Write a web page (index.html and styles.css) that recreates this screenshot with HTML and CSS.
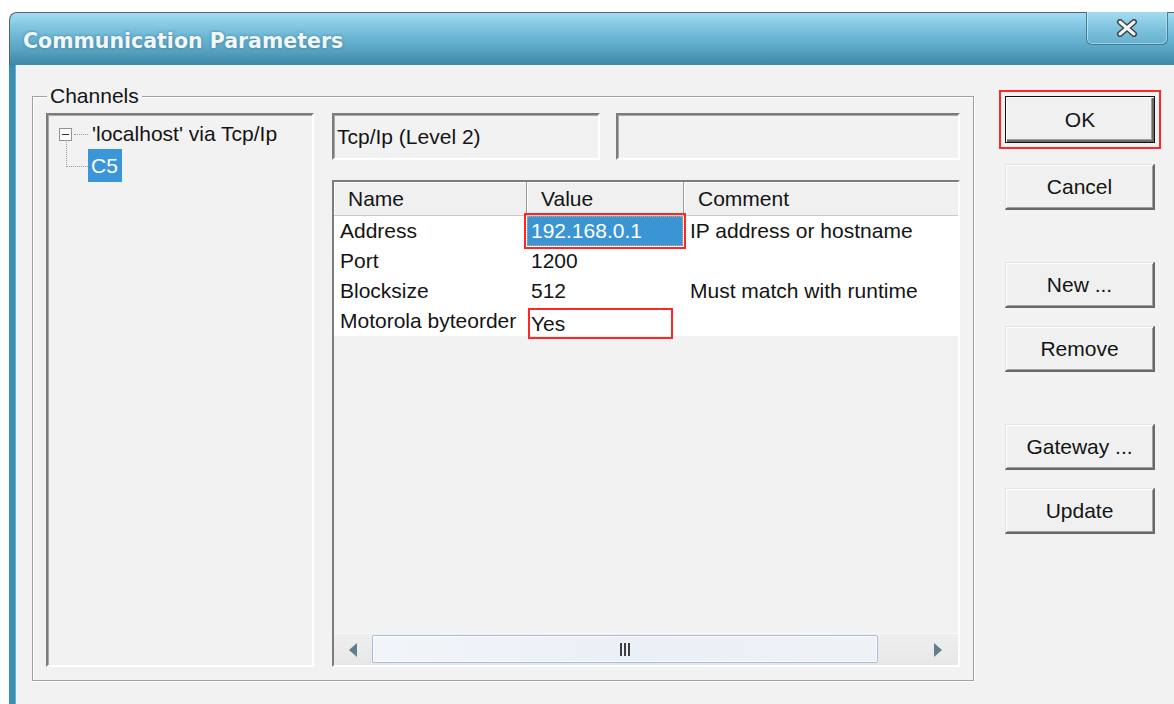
FILE: index.html
```html
<!DOCTYPE html>
<html lang="en">
<head>
<meta charset="utf-8">
<title>Communication Parameters</title>
<link rel="stylesheet" href="styles.css">
</head>
<body>
<div class="window">
  <header class="titlebar">
    <h1 class="title">Communication Parameters</h1>
    <button class="close" type="button" aria-label="Close">
      <svg width="22" height="18" viewBox="0 0 22 18" aria-hidden="true">
        <path d="M4 3 L18 15 M18 3 L4 15" stroke="#3e4346" stroke-width="6" stroke-linecap="round" fill="none"/>
        <path d="M4 3 L18 15 M18 3 L4 15" stroke="#f3f5f6" stroke-width="3" stroke-linecap="round" fill="none"/>
      </svg>
    </button>
  </header>

  <main class="client">
    <fieldset class="group">
      <legend>Channels</legend>
      <div class="group-body">
        <div class="tree sunken">
          <div class="node">
            <span class="expander"></span>
            <span class="hdots"></span>
            <span class="node-label">'localhost' via Tcp/Ip</span>
          </div>
          <div class="node child">
            <span class="elbow"></span>
            <span class="node-label selected">C5</span>
          </div>
        </div>

        <div class="detail">
          <div class="info-row">
            <div class="field sunken field-driver">Tcp/Ip (Level 2)</div>
            <div class="field sunken field-extra"></div>
          </div>

          <div class="list sunken">
            <div class="grid head">
              <div class="th">Name</div>
              <div class="th">Value</div>
              <div class="th th-last">Comment</div>
            </div>
            <div class="grid rows">
              <div class="td">Address</div>
              <div class="td val sel">192.168.0.1</div>
              <div class="td">IP address or hostname</div>

              <div class="td">Port</div>
              <div class="td val">1200</div>
              <div class="td"></div>

              <div class="td">Blocksize</div>
              <div class="td val">512</div>
              <div class="td">Must match with runtime</div>

              <div class="td">Motorola byteorder</div>
              <div class="td val val-boxed"><span class="boxed">Yes</span></div>
              <div class="td"></div>
            </div>
            <div class="list-fill"></div>
            <div class="hscroll">
              <div class="sb-btn"><span class="tri tri-left"></span></div>
              <div class="thumb"><span class="grip"><i></i><i></i><i></i></span></div>
              <div class="sb-track"></div>
              <div class="sb-btn sb-btn-right"><span class="tri tri-right"></span></div>
            </div>
          </div>
        </div>
      </div>
    </fieldset>

    <div class="buttons">
      <button class="btn btn-default" type="button">OK</button>
      <button class="btn btn-cancel" type="button">Cancel</button>
      <button class="btn btn-sep" type="button">New ...</button>
      <button class="btn btn-near" type="button">Remove</button>
      <button class="btn btn-sep" type="button">Gateway ...</button>
      <button class="btn btn-near" type="button">Update</button>
    </div>
  </main>
</div>
</body>
</html>
```

FILE: styles.css
```css
* {
  box-sizing: border-box;
}

body {
  margin: 0;
  background: #ffffff;
  font-family: "Liberation Sans", Arial, sans-serif;
  font-size: 21px;
  color: #141414;
  overflow: hidden;
}

/* ---------- window frame ---------- */
.window {
  margin: 12px 0 0 9px;
  height: 692px;
  display: flex;
  flex-direction: column;
}

.titlebar {
  height: 53px;
  flex: none;
  display: flex;
  align-items: center;
  padding: 4px 0 0 13px;
  border-top: 1px solid #56636a;
  border-left: 1px solid #56636a;
  border-top-left-radius: 8px;
  background: linear-gradient(#a2dcf2 0%, #86c9e4 22%, #6db7d5 45%, #58a4c3 70%, #3f88a7 100%);
}

.title {
  margin: 0;
  font-family: "DejaVu Sans", Verdana, sans-serif;
  font-weight: bold;
  font-size: 20.5px;
  color: #f1f6f8;
  text-shadow: 0 0 3px rgba(30, 80, 105, 0.55);
  white-space: nowrap;
}

.close {
  align-self: flex-start;
  margin: -5px 6px 0 auto;
  width: 82px;
  height: 33px;
  padding: 0;
  display: flex;
  align-items: center;
  justify-content: center;
  border: 1px solid #3e7f9a;
  border-top: none;
  border-radius: 0 0 6px 6px;
  background: linear-gradient(#a5dbef, #79bfdb 60%, #66b0cf);
  box-shadow: inset 1px 0 rgba(255, 255, 255, 0.45), inset -1px -1px rgba(255, 255, 255, 0.35);
}

.client {
  flex: 1;
  display: flex;
  align-items: flex-start;
  padding: 20px 0 0 17px;
  background: #f2f2f2;
  border-left: 6px solid #3d8db2;
  box-shadow: inset 1px 0 #69add0;
}

/* ---------- group box ---------- */
.group {
  margin: 0;
  padding: 6px 13px 13px;
  border: 1px solid #a0a0a0;
  box-shadow: inset 1px 1px #ffffff, 1px 1px #ffffff;
  flex: none;
}

.group legend {
  margin-left: 1px;
  padding: 0 3px;
  line-height: 22px;
  background: #f2f2f2;
}

.group-body {
  width: 914px;
  height: 554px;
  display: flex;
  gap: 18px;
}

.sunken {
  border: 2px solid;
  border-color: #7c7c7c #ffffff #ffffff #7c7c7c;
  box-shadow: inset 1px 1px #a9a9a9;
}

/* ---------- channel tree ---------- */
.tree {
  width: 268px;
  flex: none;
  padding: 4px 0 0 11px;
  background: #f2f2f2;
}

.node {
  display: flex;
  align-items: center;
  height: 30px;
}

.expander {
  width: 13px;
  height: 13px;
  flex: none;
  border: 1px solid #939393;
  background: #fbfbfb;
  display: flex;
  align-items: center;
  justify-content: center;
}

.expander::after {
  content: "";
  width: 7px;
  height: 1px;
  background: #333333;
}

.hdots {
  width: 14px;
  margin: 0 4px 0 2px;
  border-top: 1px dotted #9a9a9a;
}

.node-label {
  white-space: nowrap;
}

.node.child {
  height: 33px;
  align-items: stretch;
}

.elbow {
  width: 22px;
  height: 25px;
  margin: -7px 0 0 7px;
  border-left: 1px dotted #9a9a9a;
  border-bottom: 1px dotted #9a9a9a;
}

.node-label.selected {
  display: flex;
  align-items: center;
  padding: 0 4px 0 3px;
  background: #3a96d9;
  color: #ffffff;
}

/* ---------- right side: driver info + parameter list ---------- */
.detail {
  width: 628px;
  flex: none;
  display: flex;
  flex-direction: column;
  gap: 20px;
}

.info-row {
  display: flex;
  gap: 16px;
  height: 47px;
}

.field {
  display: flex;
  align-items: center;
  padding-left: 3px;
  background: #f2f2f2;
  white-space: nowrap;
}

.field-driver {
  width: 268px;
}

.field-extra {
  width: 344px;
}

.list {
  height: 487px;
  display: flex;
  flex-direction: column;
  background: #f2f2f2;
  box-shadow: none;
}

.grid {
  display: grid;
  grid-template-columns: 193px 157px 1fr;
}

.head {
  height: 34px;
}

.th {
  padding-left: 14px;
  line-height: 33px;
  background: #f0f0f0;
  border-right: 1px solid #9c9c9c;
  border-bottom: 1px solid #c9c9c9;
  box-shadow: inset 1px 1px #ffffff;
  white-space: nowrap;
}

.th-last {
  border-right: none;
}

.td {
  height: 30px;
  line-height: 30px;
  padding-left: 6px;
  background: #ffffff;
  white-space: nowrap;
}

.td.val {
  padding-left: 4px;
}

.td.sel {
  position: relative;
  padding-left: 3px;
  line-height: 28px;
  width: 156px;
  background: #3b95d4;
  color: #ffffff;
  border: 1px dotted #e0a466;
  outline: 2px solid #ff2626;
  outline-offset: 1px;
}

.td.val-boxed {
  padding-left: 0;
}

.boxed {
  position: relative;
  display: block;
  width: 141px;
  height: 27px;
  line-height: 27px;
  margin: 4px 0 0 3px;
  padding-left: 1px;
  outline: 2px solid #ff2626;
}

.list-fill {
  flex: 1;
}

/* horizontal scroll bar */
.hscroll {
  height: 32px;
  flex: none;
  display: flex;
  background: linear-gradient(#efefef, #e7e7e7);
  border-top: 1px solid #f7f7f7;
}

.sb-btn {
  width: 38px;
  flex: none;
  display: flex;
  align-items: center;
  justify-content: center;
}

.sb-btn-right {
  width: 40px;
}

.tri {
  width: 0;
  height: 0;
  border-top: 7px solid transparent;
  border-bottom: 7px solid transparent;
}

.tri-left {
  border-right: 8px solid #5f7e8e;
}

.tri-right {
  border-left: 8px solid #5f7e8e;
}

.thumb {
  width: 506px;
  flex: none;
  margin: 1px 0 2px;
  display: flex;
  align-items: center;
  justify-content: center;
  border: 1px solid #a5bedf;
  border-radius: 2px;
  background: linear-gradient(90deg, #f1f5fa, #ebf0f6 50%, #eef2f7);
  box-shadow: inset 0 0 0 1px #fbfcfe;
}

.grip {
  display: flex;
  gap: 2px;
  height: 13px;
}

.grip i {
  width: 2px;
  background: #3f3f3f;
}

.sb-track {
  flex: 1;
}

/* ---------- command buttons ---------- */
.buttons {
  width: 150px;
  flex: none;
  margin: 11px 0 0 31px;
  display: flex;
  flex-direction: column;
}

.btn {
  height: 46px;
  padding: 0;
  font: inherit;
  color: #141414;
  background: #f0f0f0;
  border-style: solid;
  border-width: 1px 2px 2px 1px;
  border-color: #e3e3e3 #696969 #696969 #e3e3e3;
  box-shadow: inset 1px 1px #ffffff, inset -1px -1px #a0a0a0;
}

.btn-default {
  height: 47px;
  border: 1px solid #111111;
  box-shadow: inset 1px 1px #ffffff, inset -2px -2px #696969, inset -3px -3px #a0a0a0;
  outline: 2px solid #ff2626;
  outline-offset: 4px;
}

.btn-cancel {
  margin-top: 21px;
}

.btn-sep {
  margin-top: 52px;
}

.btn-near {
  margin-top: 18px;
}
```
